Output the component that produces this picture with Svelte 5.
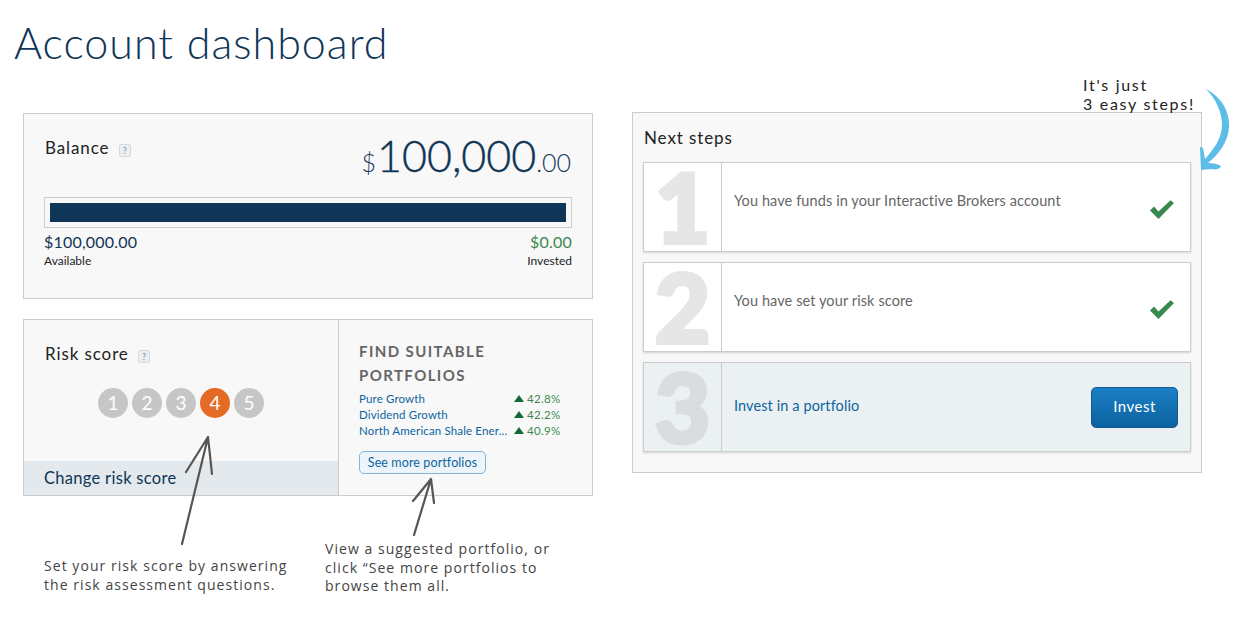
<script>
  const scores = [1, 2, 3, 4, 5];
  const active = 4;
  const portfolios = [
    { name: "Pure Growth", pct: "42.8%" },
    { name: "Dividend Growth", pct: "42.2%" },
    { name: "North American Shale Ener...", pct: "40.9%" }
  ];
  const steps = [
    { n: 1, text: "You have funds in your Interactive Brokers account", done: true },
    { n: 2, text: "You have set your risk score", done: true },
    { n: 3, text: "Invest in a portfolio", done: false }
  ];
</script>

<div class="page">
  <h1>Account dashboard</h1>

  <div class="columns">
    <div class="left">
      <section class="card balance">
        <div class="balance-head">
          <h2>Balance <span class="help">?</span></h2>
          <div class="amount"><span class="cur">$</span>100,000<span class="cents">.00</span></div>
        </div>
        <div class="bar"><div class="fill"></div></div>
        <div class="totals">
          <div>
            <div class="money">$100,000.00</div>
            <div class="cap">Available</div>
          </div>
          <div class="right">
            <div class="money green">$0.00</div>
            <div class="cap">Invested</div>
          </div>
        </div>
      </section>

      <section class="card risk">
        <div class="risk-left">
          <div class="risk-top">
            <h2>Risk score <span class="help">?</span></h2>
            <div class="scores">
              {#each scores as s}
                <span class="score" class:on={s === active}>{s}</span>
              {/each}
            </div>
          </div>
          <div class="change">Change risk score</div>
        </div>
        <div class="risk-right">
          <h3>FIND SUITABLE PORTFOLIOS</h3>
          <ul>
            {#each portfolios as p}
              <li>
                <span class="name">{p.name}</span>
                <span class="tri"></span>
                <span class="pct">{p.pct}</span>
              </li>
            {/each}
          </ul>
          <button class="more">See more portfolios</button>
        </div>
      </section>

      <div class="notes">
        <p class="note first">Set your risk score by answering<br />the risk assessment questions.</p>
        <p class="note second">View a suggested portfolio, or<br />click “See more portfolios to<br />browse them all.</p>
      </div>
    </div>

    <section class="card next">
      <h2>Next steps</h2>
      {#each steps as step}
        <div class="step" class:current={!step.done}>
          <div class="num">{step.n}</div>
          <div class="body">
            <span class="txt">{step.text}</span>
            {#if step.done}
              <svg class="check" width="26" height="20" viewBox="0 0 26 20">
                <polygon fill="#38894f" points="1,10.5 9.5,19 25,3 21.5,0.3 9.5,11.5 5,6.5" />
              </svg>
            {:else}
              <button class="invest">Invest</button>
            {/if}
          </div>
        </div>
      {/each}
    </section>
  </div>

  <p class="note easy">It's just<br />3 easy steps!</p>

  <svg class="marks" width="1250" height="625" viewBox="0 0 1250 625">
    <g fill="none" stroke="#555" stroke-width="2.200" stroke-linecap="round" stroke-linejoin="round">
      <path d="M182 544 L208 437 M186 472 L208 437 L212 474" />
      <path d="M414 535 L431 479 M413 501 L431 479 L434 503" />
    </g>
    <path
      fill="#5bbde8"
      d="M1206 89 C1221 97 1230 111 1229 127 C1228 143 1218 155 1208 163 C1213 163 1218 164 1221 166 C1220 169 1216 170 1211 169 L1201 170 L1200 147 L1203 148 L1205 159 C1214 149 1222 138 1222 125 C1222 112 1216 99 1206 89 Z"
    />
  </svg>
</div>

<style>
  :global(body) {
    margin: 0;
    background: #fff;
    font-family: Lato, "Open Sans", sans-serif;
  }
  * {
    box-sizing: border-box;
  }
  .page {
    position: relative;
    width: 1250px;
    height: 625px;
    overflow: hidden;
  }
  h1 {
    margin: 0;
    padding: 18px 0 0 14px;
    height: 112px;
    font-size: 43px;
    line-height: 50px;
    font-weight: 300;
    color: #0f3557;
    letter-spacing: 1px;
  }
  .columns {
    display: flex;
    align-items: flex-start;
    gap: 39px;
    padding-left: 23px;
  }
  .left {
    width: 570px;
    padding-top: 1px;
  }
  .card {
    border: 1px solid #ccc;
    background: #f8f8f8;
  }
  h2 {
    margin: 0;
    padding-left: 1px;
    font-size: 17px;
    line-height: 22px;
    font-weight: 400;
    color: #222;
    letter-spacing: 0.9px;
  }
  .help {
    display: inline-block;
    width: 12px;
    height: 13px;
    margin-left: 4px;
    border: 1px solid #d5dae0;
    border-radius: 2px;
    background: #eceff2;
    color: #7d8ea3;
    font-size: 9px;
    line-height: 11px;
    text-align: center;
    letter-spacing: 0;
  }

  .balance {
    height: 186px;
    padding: 23px 20px 0;
  }
  .balance-head {
    display: flex;
    justify-content: space-between;
    align-items: flex-start;
    height: 60px;
  }
  .amount {
    margin-top: -8px;
    padding-right: 1px;
    font-size: 43px;
    line-height: 54px;
    font-weight: 300;
    color: #0f3557;
    -webkit-text-stroke: 0.4px #0f3557;
  }
  .cur {
    font-size: 25px;
    margin-right: 1px;
    -webkit-text-stroke: 0;
  }
  .cents {
    font-size: 25px;
    -webkit-text-stroke: 0;
  }
  .bar {
    height: 31px;
    padding: 5px;
    border: 1px solid #ccc;
  }
  .fill {
    height: 100%;
    background: #0f3557;
  }
  .totals {
    display: flex;
    justify-content: space-between;
    padding-top: 5px;
  }
  .right {
    text-align: right;
  }
  .money {
    font-size: 16px;
    line-height: 18px;
    color: #0f3557;
    letter-spacing: 0.2px;
  }
  .green {
    color: #38894f;
  }
  .cap {
    padding-top: 1px;
    font-size: 12px;
    line-height: 17px;
    color: #222;
  }

  .risk {
    display: flex;
    height: 177px;
    margin-top: 20px;
  }
  .risk-left {
    display: flex;
    flex-direction: column;
    width: 315px;
    border-right: 1px solid #ccc;
  }
  .risk-top {
    flex: 1;
    padding: 23px 20px 0;
  }
  .scores {
    display: flex;
    justify-content: center;
    gap: 4px;
    margin-top: 23px;
  }
  .score {
    width: 30px;
    height: 30px;
    border-radius: 50%;
    background: #c6c6c6;
    color: #fff;
    font-size: 19px;
    line-height: 30px;
    text-align: center;
  }
  .score.on {
    background: #e56a25;
  }
  .change {
    height: 34px;
    padding-left: 20px;
    background: #e4e9ed;
    color: #0f3557;
    font-size: 16.500px;
    line-height: 34px;
    letter-spacing: 0.3px;
  }
  .risk-right {
    flex: 1;
    padding: 19px 20px 0;
  }
  h3 {
    margin: 0;
    width: 160px;
    font-size: 15px;
    line-height: 24px;
    font-weight: 700;
    letter-spacing: 1.400px;
    color: #666;
  }
  ul {
    list-style: none;
    margin: 3px 0 0;
    padding: 0;
  }
  li {
    display: flex;
    align-items: center;
    height: 16px;
    font-size: 11.500px;
    letter-spacing: 0.15px;
  }
  .name {
    width: 148px;
    margin-right: 7px;
    white-space: nowrap;
    color: #0b64a0;
  }
  .tri {
    width: 0;
    height: 0;
    margin-right: 3px;
    border-left: 5px solid transparent;
    border-right: 5px solid transparent;
    border-bottom: 7px solid #14693a;
  }
  .pct {
    color: #38894f;
    letter-spacing: 0.3px;
  }
  .more {
    display: block;
    width: 127px;
    height: 23px;
    margin-top: 13px;
    padding: 0;
    border: 1px solid #7fb5d9;
    border-radius: 5px;
    background: #eef5fa;
    color: #0b64a0;
    font-family: inherit;
    font-size: 12.500px;
    letter-spacing: 0.1px;
  }

  .next {
    width: 570px;
    height: 361px;
    padding: 14px 10px 0;
  }
  .next h2 {
    margin-bottom: 13px;
  }
  .step {
    display: flex;
    height: 90px;
    margin-bottom: 10px;
    border: 1px solid #ccc;
    background: #fff;
    box-shadow: 0 1px 2px rgba(0, 0, 0, 0.15);
  }
  .step.current {
    background: #ebf0f3;
  }
  .num {
    width: 78px;
    border-right: 1px solid #ccc;
    text-align: center;
    font-weight: 900;
    font-size: 96px;
    line-height: 86px;
    color: #e6e6e6;
    -webkit-text-stroke: 4px #e6e6e6;
  }
  .current .num {
    color: #d9dde0;
    -webkit-text-stroke-color: #d9dde0;
  }
  .body {
    flex: 1;
    display: flex;
    justify-content: space-between;
    align-items: flex-start;
    padding: 28px 15px 0 12px;
    font-size: 14.500px;
    line-height: 20px;
    letter-spacing: 0.1px;
    color: #666;
  }
  .check {
    margin-top: 9px;
  }
  .current .body {
    align-items: center;
    padding-top: 0;
    padding-right: 12px;
    color: #0b64a0;
  }
  .current .txt {
    padding-bottom: 3px;
  }
  .invest {
    width: 87px;
    height: 41px;
    padding: 0 0 2px;
    border: 1px solid #0f5a94;
    border-radius: 5px;
    background: linear-gradient(#1a7fc4, #0d62a0);
    color: #fff;
    font-family: inherit;
    font-size: 15px;
    letter-spacing: 0.5px;
  }

  .notes {
    display: flex;
    padding-left: 21px;
    padding-top: 44px;
  }
  .note {
    margin: 0;
    font-family: "Open Sans", sans-serif;
    font-weight: 400;
    font-size: 14px;
    letter-spacing: 1.050px;
    color: #444;
  }
  .first {
    width: 281px;
    padding-top: 16px;
    line-height: 19px;
  }
  .second {
    line-height: 18.500px;
  }
  .easy {
    position: absolute;
    left: 1083px;
    top: 75px;
    font-family: Lato, sans-serif;
    font-size: 16px;
    line-height: 19px;
    letter-spacing: 1.700px;
    color: #222;
  }
  .marks {
    position: absolute;
    left: 0;
    top: 0;
    pointer-events: none;
  }
</style>
